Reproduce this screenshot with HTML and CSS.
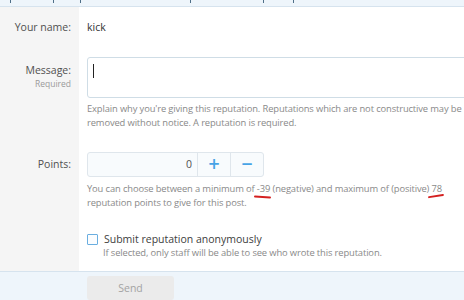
FILE: index.html
```html
<!DOCTYPE html>
<html lang="en">
<head>
  <meta charset="UTF-8">
  <title>Give reputation</title>
  <link rel="stylesheet" href="styles.css">
</head>
<body>
  <!-- only the lower edge of the overlay title shows, with a few descenders poking out -->
  <div class="overlay-title">
    <span class="tick t1"></span><span class="tick t2"></span><span class="tick t3"></span><span class="tick t4"></span><span class="tick t5"></span><span class="tick t6"></span>
  </div>

  <form class="rep-form">
    <div class="row row-name">
      <div class="label-cell"><span class="label">Your name:</span></div>
      <div class="field-cell"><span class="value">kick</span></div>
    </div>

    <div class="row row-message">
      <div class="label-cell">
        <span class="label">Message:</span>
        <span class="hint-label">Required</span>
      </div>
      <div class="field-cell">
        <div class="textarea"><span class="caret"></span></div>
        <p class="explain">Explain why you're giving this reputation. Reputations which are not constructive may be removed without notice. A reputation is required.</p>
      </div>
    </div>

    <div class="row row-points">
      <div class="label-cell"><span class="label label-points">Points:</span></div>
      <div class="field-cell">
        <div class="spinbox">
          <div class="spin-input">0</div>
          <button type="button" class="spin-btn">+</button>
          <button type="button" class="spin-btn">&minus;</button>
        </div>
        <p class="explain">You can choose between a minimum of <span class="scribble">-39</span> (negative) and maximum of (positive) <span class="scribble scribble-up">78</span> reputation points to give for this post.</p>
      </div>
    </div>

    <div class="row row-anon">
      <div class="label-cell"></div>
      <div class="field-cell">
        <label class="check"><span class="box"></span>Submit reputation anonymously</label>
        <p class="explain explain-anon">If selected, only staff will be able to see who wrote this reputation.</p>
      </div>
    </div>

    <div class="footer">
      <button type="button" class="send">Send</button>
    </div>
  </form>
</body>
</html>
```

FILE: styles.css
```css
body {
  margin: 0;
  background: #ffffff;
  font-family: "Open Sans", "Noto Sans", sans-serif;
  font-size: 11px;
  line-height: 18px;
  color: #505050;
  overflow: hidden;
}

/* title bar of the overlay */
.overlay-title {
  display: flex;
  align-items: flex-start;
  height: 6px;
  background: #eef5fb;
  border-bottom: 1px solid #d6e3ee;
}

.tick {
  width: 1px;
  height: 3px;
  background: #4f6f88;
}

.t1 { margin-left: 10px; }
.t2 { margin-left: 42px; }
.t3 { margin-left: 26px; }
.t4 { margin-left: 109px; }
.t5 { margin-left: 72px; }
.t6 { margin-left: 29px; }

.row {
  display: grid;
  grid-template-columns: 79px 1fr;
}

.label-cell {
  background: #f5f5f5;
  padding-right: 8px;
  display: flex;
  flex-direction: column;
  align-items: flex-end;
}

.field-cell {
  padding-left: 8px;
  min-width: 0;
}

.label {
  font-size: 10.5px;
  line-height: 18px;
  color: #505050;
}

.hint-label {
  font-size: 8.5px;
  line-height: 10px;
  color: #9a9a9a;
}

.value {
  font-size: 10.5px;
  line-height: 18px;
  color: #333333;
}

.row-name .label-cell,
.row-name .field-cell {
  padding-top: 11px;
  padding-bottom: 11px;
}

.row-message .label-cell {
  padding-top: 14px;
}

.row-message .field-cell {
  padding-top: 10px;
  padding-bottom: 11px;
}

.textarea {
  width: 400px;
  height: 41px;
  box-sizing: border-box;
  border: 1px solid #cfdde6;
  border-radius: 3px;
  background: #ffffff;
  padding: 6px 0 0 5px;
}

.caret {
  display: block;
  width: 1px;
  height: 14px;
  background: #222222;
}

.explain {
  margin: 4px 0 0;
  font-size: 9.4px;
  line-height: 14px;
  letter-spacing: -0.13px;
  color: #8a8a8a;
  width: 383px;
}

.row-points .label-cell {
  padding-top: 11px;
}

.label-points {
  line-height: 25px;
}

.row-points .field-cell {
  padding-top: 11px;
  padding-bottom: 10px;
}

.spinbox {
  display: flex;
  width: 177px;
  height: 25px;
  box-sizing: border-box;
  border: 1px solid #dfe6ec;
  border-radius: 3px;
  background: #f8fbfd;
}

.spin-input {
  flex: 1;
  text-align: right;
  padding-right: 5px;
  font-size: 10.5px;
  line-height: 23px;
  color: #505050;
}

.spin-btn {
  width: 33px;
  padding: 0;
  border: none;
  border-left: 1px solid #dfe6ec;
  background: transparent;
  color: #47a3e6;
  font-family: "DejaVu Sans", sans-serif;
  font-size: 15px;
  font-weight: bold;
  line-height: 23px;
}

.row-points .explain {
  margin-top: 5px;
}

/* red hand-drawn marks under the two limits */
.scribble {
  position: relative;
}

.scribble::after {
  content: "";
  position: absolute;
  left: -3px;
  right: -1px;
  bottom: -3px;
  height: 2px;
  border-radius: 2px;
  background: #d42020;
  transform: rotate(3deg);
}

.scribble-up::after {
  left: -4px;
  right: -2px;
  bottom: -2px;
  transform: rotate(-9deg);
}

.row-anon .field-cell {
  padding-top: 10px;
  padding-bottom: 11px;
}

.check {
  display: flex;
  align-items: center;
  gap: 6px;
  font-size: 10.5px;
  line-height: 18px;
  color: #404040;
}

.box {
  width: 11px;
  height: 11px;
  box-sizing: border-box;
  border: 1.5px solid #6aaee0;
  border-radius: 1px;
  background: #fbfdff;
}

.explain-anon {
  margin: -2px 0 0 16px;
}

.footer {
  border-top: 1px solid #d6e3ee;
  background: #eef5fb;
  padding: 4px 0 0 87px;
  height: 40px;
}

.send {
  width: 87px;
  height: 24px;
  border: none;
  border-radius: 3px;
  background: #ebebeb;
  color: #a3a3a3;
  font-family: "Open Sans", "Noto Sans", sans-serif;
  font-size: 10.5px;
}
```
